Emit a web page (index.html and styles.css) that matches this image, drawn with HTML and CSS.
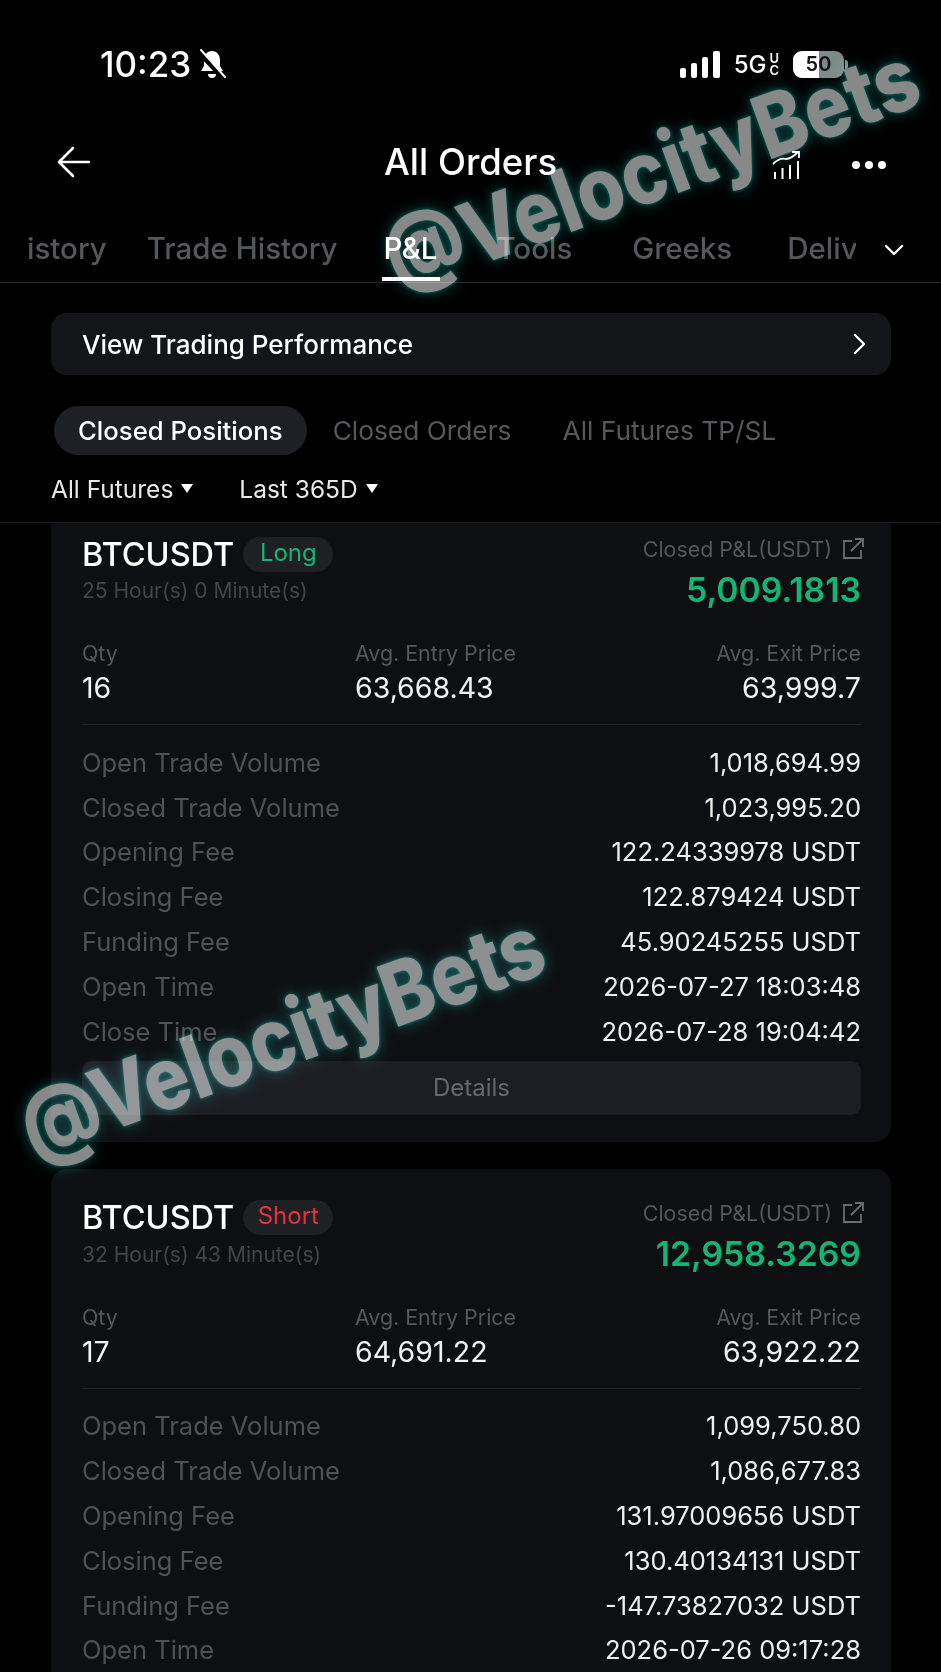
FILE: index.html
```html
<!DOCTYPE html>
<html lang="en">

<head>
    <meta charset="UTF-8">
    <meta name="viewport" content="width=device-width, initial-scale=1.0">
    <title>All Orders</title>
    <link rel="stylesheet" href="styles.css">
</head>

<body>
    <div class="screen">
        <!-- Status bar -->
        <div class="status-bar">
            <div class="status-left">
                <span class="clock">10:23</span>
                <svg class="bell" viewBox="0 0 30 32" width="30" height="32">
                    <path d="M15 3c-5 0-8 4-8 9v6l-3 5h22l-3-5v-6c0-5-3-9-8-9z" fill="#fff"/>
                    <path d="M11 26a4 4 0 0 0 8 0z" fill="#fff"/>
                    <path d="M2 4l24 26" stroke="#000" stroke-width="5"/>
                    <path d="M4 2l24 27" stroke="#fff" stroke-width="2" stroke-linecap="round"/>
                </svg>
            </div>
            <div class="status-right">
                <svg viewBox="0 0 40 27" width="40" height="27">
                    <rect x="0" y="17" width="6" height="10" rx="2" fill="#fff"/>
                    <rect x="11" y="12" width="6" height="15" rx="2" fill="#fff"/>
                    <rect x="22" y="6" width="6" height="21" rx="2" fill="#fff"/>
                    <rect x="33" y="0" width="7" height="27" rx="2" fill="#fff"/>
                </svg>
                <span class="network">5G<span class="network-uc">U<br>C</span></span>
                <span class="battery"><span class="battery-fill"></span><span class="battery-num">50</span></span>
            </div>
        </div>

        <!-- Header -->
        <div class="header">
            <svg class="back" viewBox="0 0 34 32" width="34" height="32">
                <path d="M32 16H3M16 2L2 16l14 14" fill="none" stroke="#fff" stroke-width="2.6" stroke-linecap="round" stroke-linejoin="round"/>
            </svg>
            <h1>All Orders</h1>
            <svg class="chart" viewBox="0 0 30 30" width="30" height="30">
                <path d="M1 14C6 9 10 8 14 9c4 0 8-3 12-7M20 2h7v6" fill="none" stroke="#fff" stroke-width="1.8"/>
                <path d="M3 29v-7M10.500 29V18M18 29V15M26 29V11" fill="none" stroke="#fff" stroke-width="2"/>
            </svg>
            <div class="dots"><i></i><i></i><i></i></div>
        </div>

        <!-- Tabs -->
        <div class="tabs">
            <span class="tab tab-history">istory</span>
            <span class="tab tab-trade">Trade History</span>
            <span class="tab tab-active">P&amp;L</span>
            <span class="tab tab-tools">Tools</span>
            <span class="tab tab-greeks">Greeks</span>
            <span class="tab tab-deliv">Deliv</span>
            <svg class="tabs-more" viewBox="0 0 20 12" width="20" height="12">
                <path d="M2 2l8 8 8-8" fill="none" stroke="#fff" stroke-width="2.4" stroke-linecap="round" stroke-linejoin="round"/>
            </svg>
        </div>

        <div class="perf">
            <span>View Trading Performance</span>
            <svg viewBox="0 0 14 22" width="14" height="22">
                <path d="M2 2l9 9-9 9" fill="none" stroke="#fff" stroke-width="2.4" stroke-linecap="round" stroke-linejoin="round"/>
            </svg>
        </div>

        <div class="subtabs">
            <span class="subtab subtab-active">Closed Positions</span>
            <span class="subtab">Closed Orders</span>
            <span class="subtab">All Futures TP/SL</span>
        </div>

        <div class="filters">
            <span class="filter">All Futures <i class="caret"></i></span>
            <span class="filter">Last 365D <i class="caret"></i></span>
        </div>

        <!-- Positions -->
        <div class="list">
            <div class="card card-first">
                <div class="card-top">
                    <div>
                        <div class="symbol-line">
                            <span class="symbol">BTCUSDT</span>
                            <span class="side side-long">Long</span>
                        </div>
                        <div class="duration">25 Hour(s) 0 Minute(s)</div>
                    </div>
                    <div class="pnl">
                        <div class="pnl-label">Closed P&amp;L(USDT)
                            <svg viewBox="0 0 22 22" width="22" height="22">
                                <path d="M10 3H2v17h17v-8M13 1h8v8M21 1L9 13" fill="none" stroke="#6a6c70" stroke-width="1.8"/>
                            </svg>
                        </div>
                        <div class="pnl-value">5,009.1813</div>
                    </div>
                </div>
                <div class="prices">
                    <div><div class="price-label">Qty</div><div class="price-value">16</div></div>
                    <div><div class="price-label">Avg. Entry Price</div><div class="price-value">63,668.43</div></div>
                    <div class="price-right"><div class="price-label">Avg. Exit Price</div><div class="price-value">63,999.7</div></div>
                </div>
                <div class="rows">
                    <div class="row"><span>Open Trade Volume</span><b>1,018,694.99</b></div>
                    <div class="row"><span>Closed Trade Volume</span><b>1,023,995.20</b></div>
                    <div class="row"><span>Opening Fee</span><b>122.24339978 USDT</b></div>
                    <div class="row"><span>Closing Fee</span><b>122.879424 USDT</b></div>
                    <div class="row"><span>Funding Fee</span><b>45.90245255 USDT</b></div>
                    <div class="row"><span>Open Time</span><b>2026-07-27 18:03:48</b></div>
                    <div class="row"><span>Close Time</span><b>2026-07-28 19:04:42</b></div>
                </div>
                <div class="details">Details</div>
            </div>

            <div class="card">
                <div class="card-top">
                    <div>
                        <div class="symbol-line">
                            <span class="symbol">BTCUSDT</span>
                            <span class="side side-short">Short</span>
                        </div>
                        <div class="duration">32 Hour(s) 43 Minute(s)</div>
                    </div>
                    <div class="pnl">
                        <div class="pnl-label">Closed P&amp;L(USDT)
                            <svg viewBox="0 0 22 22" width="22" height="22">
                                <path d="M10 3H2v17h17v-8M13 1h8v8M21 1L9 13" fill="none" stroke="#6a6c70" stroke-width="1.8"/>
                            </svg>
                        </div>
                        <div class="pnl-value">12,958.3269</div>
                    </div>
                </div>
                <div class="prices">
                    <div><div class="price-label">Qty</div><div class="price-value">17</div></div>
                    <div><div class="price-label">Avg. Entry Price</div><div class="price-value">64,691.22</div></div>
                    <div class="price-right"><div class="price-label">Avg. Exit Price</div><div class="price-value">63,922.22</div></div>
                </div>
                <div class="rows">
                    <div class="row"><span>Open Trade Volume</span><b>1,099,750.80</b></div>
                    <div class="row"><span>Closed Trade Volume</span><b>1,086,677.83</b></div>
                    <div class="row"><span>Opening Fee</span><b>131.97009656 USDT</b></div>
                    <div class="row"><span>Closing Fee</span><b>130.40134131 USDT</b></div>
                    <div class="row"><span>Funding Fee</span><b>-147.73827032 USDT</b></div>
                    <div class="row"><span>Open Time</span><b>2026-07-26 09:17:28</b></div>
                </div>
            </div>
        </div>

        <!-- Watermarks -->
        <div class="watermark watermark-top">@VelocityBets</div>
        <div class="watermark watermark-bottom">@VelocityBets</div>
    </div>
</body>

</html>
```

FILE: styles.css
```css
* {
    box-sizing: border-box;
    margin: 0;
    padding: 0;
}

body {
    background-color: #000;
    color: #fff;
    font-family: Inter, "Liberation Sans", sans-serif;
    overflow: hidden;
}

.screen {
    position: relative;
    width: 941px;
    height: 1672px;
    overflow: hidden;
}

.status-bar {
    height: 122px;
    padding: 42px 0 0 100px;
    display: flex;
    justify-content: space-between;
}

.status-left {
    display: flex;
    align-items: center;
    gap: 6px;
    height: 44px;
}

.clock {
    font-size: 35px;
    font-weight: 500;
}

.status-right {
    display: flex;
    align-items: center;
    height: 44px;
    padding-right: 97px;
    gap: 14px;
}

.network {
    display: flex;
    align-items: center;
    gap: 3px;
    font-size: 24px;
    font-weight: 500;
}

.network-uc {
    font-size: 13px;
    line-height: 12px;
    font-weight: 600;
}

.battery {
    position: relative;
    width: 51px;
    height: 27px;
    border-radius: 9px;
    background-color: #7d8b88;
    display: flex;
    align-items: center;
    justify-content: center;
}

.battery::after {
    content: "";
    position: absolute;
    right: -4px;
    top: 9px;
    width: 3px;
    height: 9px;
    border-radius: 0 3px 3px 0;
    background-color: #7d8b88;
}

.battery-fill {
    position: absolute;
    left: 0;
    top: 0;
    bottom: 0;
    width: 26px;
    border-radius: 9px 0 0 9px;
    background-color: #fff;
}

.battery-num {
    position: relative;
    color: #111;
    font-size: 20px;
    font-weight: 600;
}

.header {
    height: 80px;
    display: flex;
    align-items: center;
    padding: 0 55px 0 57px;
    position: relative;
}

.header h1 {
    position: absolute;
    left: 0;
    right: 0;
    text-align: center;
    font-size: 36.500px;
    font-weight: 500;
}

.chart {
    margin-left: auto;
    margin-right: 50px;
    position: relative;
    top: 3px;
}

.back {
    position: relative;
}

.dots {
    display: flex;
    gap: 5px;
    position: relative;
    top: 3px;
}

.dots i {
    width: 8px;
    height: 8px;
    border-radius: 50%;
    background-color: #fff;
}

.tabs {
    height: 81px;
    border-bottom: 1px solid #26282b;
    display: flex;
    align-items: flex-start;
    padding: 29px 0 0 27px;
    position: relative;
}

.tab {
    font-size: 29.5px;
    font-weight: 500;
    color: #55575b;
    line-height: 34px;
    white-space: nowrap;
}

.tab-trade {
    margin-left: 40px;
}

.tab-active {
    margin-left: 46px;
    color: #fff;
    position: relative;
}

.tab-active::after {
    content: "";
    position: absolute;
    left: -1px;
    right: -3px;
    top: 46px;
    height: 4px;
    background-color: #fff;
}

.tab-tools {
    margin-left: 59px;
}

.tab-greeks {
    margin-left: 60px;
}

.tab-deliv {
    margin-left: 55px;
    width: 69px;
    overflow: hidden;
}

.tabs-more {
    margin-left: 28px;
    margin-top: 13px;
}

.perf {
    margin: 30px 50px 0 51px;
    height: 62px;
    background-color: #141519;
    border-radius: 16px;
    display: flex;
    align-items: center;
    justify-content: space-between;
    padding: 0 24px 0 31px;
    font-size: 26px;
    font-weight: 500;
}

.subtabs {
    margin: 31px 0 0 54px;
    display: flex;
    align-items: center;
    gap: 26px;
    height: 49px;
}

.subtab {
    font-size: 26.300px;
    color: #56585c;
    line-height: 50px;
    padding-top: 1px;
}

.subtab:nth-child(3) {
    margin-left: 25px;
}

.subtab-active {
    font-size: 25.700px;
    background-color: #1e2026;
    color: #fff;
    font-weight: 500;
    padding: 0 24px;
    border-radius: 25px;
    line-height: 49px;
}

.filters {
    height: 68px;
    padding: 0 0 0 51px;
    display: flex;
    align-items: center;
    gap: 46px;
    border-bottom: 1px solid #1c1d20;
}

.filter {
    font-size: 24.500px;
    color: #e9e9e9;
    display: flex;
    align-items: center;
    gap: 8px;
}

.caret {
    width: 0;
    height: 0;
    border-left: 6px solid transparent;
    border-right: 6px solid transparent;
    border-top: 9px solid #fff;
}

.list {
    height: 1149px;
    overflow: hidden;
    padding: 0 50px 0 51px;
}

.card {
    background-color: #0e0f12;
    border-radius: 16px;
    padding: 29px 30px 27px 31px;
    margin-bottom: 27px;
}

.card-first {
    margin-top: -18px;
}

.card-top {
    display: flex;
    justify-content: space-between;
}

.symbol-line {
    display: flex;
    align-items: center;
    gap: 9px;
    height: 40px;
}

.symbol {
    font-size: 32.500px;
    font-weight: 500;
}

.side {
    width: 90px;
    height: 35px;
    line-height: 31px;
    text-align: center;
    border-radius: 18px;
    background-color: #1e2024;
    font-size: 24px;
}

.side-long {
    color: #12b672;
}

.side-short {
    color: #e5323f;
}

.duration {
    margin-top: 4px;
    font-size: 21px;
    color: #43454a;
}

.pnl {
    text-align: right;
}

.pnl-label {
    display: flex;
    align-items: center;
    justify-content: flex-end;
    gap: 10px;
    height: 30px;
    margin-right: -3px;
    font-size: 21.400px;
    color: #55575b;
}

.pnl-value {
    margin-top: 5px;
    font-size: 33.800px;
    font-weight: 600;
    color: #12b672;
}

.prices {
    display: grid;
    grid-template-columns: 273px 1fr 1fr;
    margin-top: 30px;
    padding-bottom: 17px;
    border-bottom: 1px solid #1f2023;
}

.price-label {
    font-size: 21.400px;
    color: #55575b;
    line-height: 26px;
}

.price-value {
    margin-top: 3px;
    font-size: 28.500px;
    line-height: 38px;
    color: #f2f2f2;
}

.price-right {
    text-align: right;
}

.rows {
    margin-top: 15px;
}

.row {
    display: flex;
    justify-content: space-between;
    align-items: center;
    height: 44.8px;
    font-size: 25.500px;
    color: #4f5155;
}

.row b {
    font-weight: 400;
    color: #eee;
}

.details {
    margin-top: 7px;
    height: 54px;
    line-height: 54px;
    text-align: center;
    border-radius: 10px;
    background-color: #1d1e24;
    font-size: 24px;
    color: #66686c;
}

/* sits over everything, screen keeps the white text on top of it */
.watermark {
    position: absolute;
    font-size: 76px;
    font-weight: 800;
    line-height: 90px;
    white-space: nowrap;
    color: #868988;
    text-shadow: 0 0 3px #127a70, 0 0 14px #0a4f49;
    transform: rotate(-20deg) scaleY(1.15);
    transform-origin: left center;
    mix-blend-mode: screen;
}

.watermark-top {
    left: 389px;
    top: 219px;
}

.watermark-bottom {
    left: 23px;
    top: 1084px;
    letter-spacing: -0.5px;
}
```
